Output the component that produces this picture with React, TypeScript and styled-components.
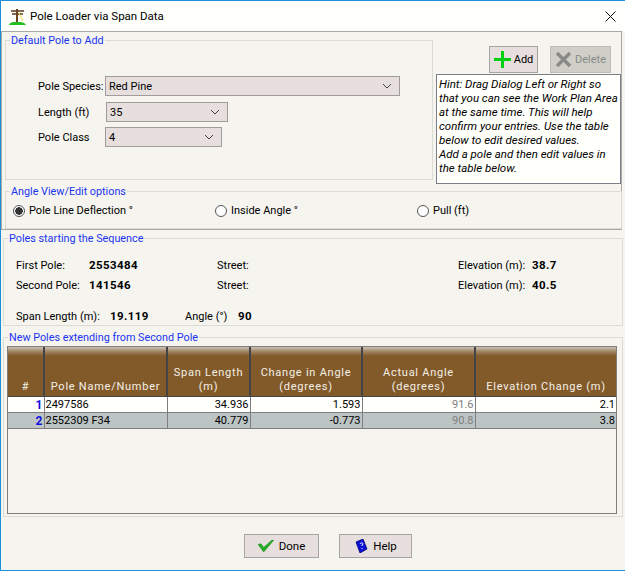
import React from 'react';
import styled, {createGlobalStyle} from 'styled-components';

const Global = createGlobalStyle`
  html, body { margin: 0; padding: 0; background: #f5f4ee; }
  body { font-family: Roboto, "Liberation Sans", sans-serif; font-size: 11px; color: #000; }
`

const Dialog = styled.div`
  width: 625px;
  height: 571px;
  box-sizing: border-box;
  border: 1px solid #1c8fdc;
  border-right: none;
  background: #f5f4ee;
  display: flex;
  flex-direction: column;
  overflow: hidden;
`

const TitleBar = styled.div`
  height: 30px;
  flex: none;
  background: #fffffb;
  display: flex;
  align-items: center;
  padding: 0 9px 0 8px;
  gap: 4px;
  font-size: 11.5px;
`

const TitleText = styled.span`
  flex: 1;
`

const UpperPanel = styled.div`
  width: 621px;
  height: 199px;
  box-sizing: border-box;
  flex: none;
  border: 1px solid #a8a8a8;
  padding-left: 3px;
  display: flex;
  flex-direction: column;
`

const TopRow = styled.div`
  display: flex;
  height: 151px;
  margin-top: 1px;
`

const Group = styled.fieldset<{ $w: number; $h: number; $ml?: number; $mt?: number }>`
  width: ${p => p.$w}px;
  height: ${p => p.$h}px;
  margin: ${p => p.$mt || 0}px 0 0 ${p => p.$ml || 0}px;
  box-sizing: border-box;
  flex: none;
  padding: 0;
  min-width: 0;
  border: 1px solid #dcdcd6;
`

const Legend = styled.legend`
  margin-left: 4px;
  padding: 1px 1px 0;
  color: #1a35f0;
  font-size: 10.8px;
  line-height: 13px;
`

const SpeciesForm = styled.div`
  display: flex;
  flex-direction: column;
  padding: 29px 0 0 32px;
`

const FormRow = styled.div<{ $gap: number }>`
  display: flex;
  align-items: center;
  height: 20px;
  margin-bottom: ${p => p.$gap}px;
`

const FormLabel = styled.span<{ $w: number }>`
  width: ${p => p.$w}px;
  flex: none;
  white-space: nowrap;
`

const Combo = styled.div<{ $w: number }>`
  width: ${p => p.$w}px;
  height: 20px;
  box-sizing: border-box;
  border: 1px solid #a09c9c;
  background: #e6dfdd;
  display: flex;
  align-items: center;
  justify-content: space-between;
  padding: 0 7px 0 3px;
`

const SideColumn = styled.div`
  margin-left: 3px;
  width: 186px;
  display: flex;
  flex-direction: column;
`

const ActionRow = styled.div`
  display: flex;
  height: 28px;
  margin-top: 13px;
  padding-left: 53px;
  gap: 12px;
`

const ActionButton = styled.div<{ $w: number; $off?: boolean }>`
  width: ${p => p.$w}px;
  height: 27px;
  box-sizing: border-box;
  border: 1px solid ${p => p.$off ? '#bdbdb6' : '#a8a4a4'};
  background: ${p => p.$off ? '#cfcfc8' : '#e6dfdd'};
  color: ${p => p.$off ? '#8a8a88' : '#000'};
  display: flex;
  align-items: center;
  justify-content: center;
  gap: 3px;
`

const HintBox = styled.div`
  height: 110px;
  box-sizing: border-box;
  border: 1px solid #807c88;
  background: #fffffb;
  padding: 2px 2px 0 2px;
  font-style: italic;
  font-size: 11.5px;
  line-height: 14px;
  white-space: nowrap;
`

const RadioRow = styled.div`
  display: grid;
  grid-template-columns: 202px 202px 1fr;
  padding: 2px 0 0 7px;
  height: 21px;
  align-items: center;
`

const RadioItem = styled.div`
  display: flex;
  align-items: center;
  gap: 4px;
`

const RadioDot = styled.span<{ $on?: boolean }>`
  width: 12px;
  height: 12px;
  box-sizing: border-box;
  border-radius: 50%;
  border: 1px solid #555;
  background: ${p => p.$on
    ? 'radial-gradient(circle, #333 0, #333 3.5px, #fff 4px)'
    : '#fff'};
`

const PoleRows = styled.div`
  padding: 10px 0 0 12px;
`

const PoleRow = styled.div`
  display: grid;
  grid-template-columns: 73px 128px 241px 74px 1fr;
  height: 20px;
  align-items: center;
`

const SpanRow = styled.div`
  display: flex;
  align-items: center;
  height: 20px;
  margin-top: 11px;
`

const SpanCell = styled.span<{ $w: number }>`
  width: ${p => p.$w}px;
  flex: none;
`

const Strong = styled.b`
  font-weight: 700;
  font-size: 11.5px;
  letter-spacing: 0.4px;
`

const GridFrame = styled.div`
  margin: 2px 0 0 3px;
  width: 610px;
  height: 168px;
  box-sizing: border-box;
  border: 1px solid #807c80;
`

const PoleTable = styled.table`
  width: 608px;
  border-collapse: collapse;
  table-layout: fixed;
`

const HeadCell = styled.th<{ $w: number }>`
  width: ${p => p.$w}px;
  height: 49px;
  box-sizing: border-box;
  padding: 0 2px 2px;
  font-weight: 400;
  vertical-align: bottom;
  text-align: center;
  color: #f4efe6;
  letter-spacing: 0.75px;
  line-height: 14px;
  border-right: 2px solid #444;
  border-bottom: 1px solid #444;
  background: linear-gradient(#c9c4b8 0, #9c805c 5px, #825a2a 9px, #825a2a 100%);
  &:last-child { border-right: none; }
`

const BodyRow = styled.tr<{ $alt?: boolean }>`
  background: ${p => p.$alt ? '#bcc4c4' : '#fffffb'};
  height: 16px;
`

const Cell = styled.td<{ $muted?: boolean; $left?: boolean }>`
  padding: 1px 1px 0;
  height: 16px;
  box-sizing: border-box;
  line-height: 14px;
  text-align: ${p => p.$left ? 'left' : 'right'};
  color: ${p => p.$muted ? '#808080' : '#000'};
  border-right: 1px solid #807c80;
  border-bottom: 1px solid #807c80;
  white-space: nowrap;
  &:last-child { border-right: none; }
`

const RowNum = styled(Cell)`
  color: #1010e0;
  font-weight: 700;
  font-size: 12px;
`

const Footer = styled.div`
  display: flex;
  gap: 20px;
  padding: 17px 0 0 243px;
`

const FootButton = styled.div<{ $w: number }>`
  width: ${p => p.$w}px;
  height: 24px;
  box-sizing: border-box;
  border: 1px solid #a8a4a4;
  background: #e6dfdd;
  display: flex;
  align-items: center;
  justify-content: center;
  gap: 5px;
  font-size: 11.5px;
`

const Chevron = () => (
  <svg width="10" height="6" viewBox="0 0 10 6"><path d="M1 1l4 4 4-4" fill="none" stroke="#444" strokeWidth="1" /></svg>
)

const PoleIcon = () => (
  <svg width="17" height="17" viewBox="0 0 17 17">
    <path d="M2 3h13M3 6h11" stroke="#5a3a1a" strokeWidth="1.5" />
    <path d="M7 1h2v13H7z" fill="#6b4520" />
    <path d="M10 5l4 8" stroke="#e8d840" strokeWidth="1" />
    <path d="M0 17c1-3 4-3 6-3h4c2 0 5 0 7 3z" fill="#20c020" />
  </svg>
)

const CloseIcon = () => (
  <svg width="11" height="11" viewBox="0 0 11 11"><path d="M.5.5l10 10M10.500.5l-10 10" stroke="#111" strokeWidth="1" fill="none" /></svg>
)

const PlusIcon = () => (
  <svg width="17" height="17" viewBox="0 0 17 17"><path d="M7 0h3v7h7v3h-7v7H7v-7H0V7h7z" fill="#00d010" /></svg>
)

const CrossIcon = () => (
  <svg width="17" height="17" viewBox="0 0 17 17"><path d="M2 2l13 13M15 2L2 15" stroke="#8a8a88" strokeWidth="3.500" fill="none" /></svg>
)

const CheckIcon = () => (
  <svg width="16" height="12" viewBox="0 0 17 13"><path d="M0 5l3-1 3 4 9-8 2 0L6 13z" fill="#20b020" stroke="#0c780c" strokeWidth=".5" /></svg>
)

const BookIcon = () => (
  <svg width="14" height="14" viewBox="0 0 14 14">
    <path d="M2 3l7-3 4 10-7 4z" fill="#0a10d8" stroke="#050570" strokeWidth=".8" />
    <path d="M6 5c1-2 3-1 3 0s-1 1-1.500 2M8 9v1" stroke="#fff" strokeWidth="1" fill="none" />
  </svg>
)

const rows = [
  {n: 1, name: '2497586', span: '34.936', change: '1.593', actual: '91.6', elev: '2.1'},
  {n: 2, name: '2552309 F34', span: '40.779', change: '-0.773', actual: '90.8', elev: '3.8'},
]

function App() {
  return (
    <Dialog>
      <Global />
      <TitleBar>
        <PoleIcon />
        <TitleText>Pole Loader via Span Data</TitleText>
        <CloseIcon />
      </TitleBar>
      <UpperPanel>
        <TopRow>
          <Group $w={428} $h={147}>
            <Legend>Default Pole to Add</Legend>
            <SpeciesForm>
              <FormRow $gap={6}>
                <FormLabel $w={67}>Pole Species:</FormLabel>
                <Combo $w={295}>Red Pine<Chevron /></Combo>
              </FormRow>
              <FormRow $gap={5}>
                <FormLabel $w={68}>Length (ft)</FormLabel>
                <Combo $w={122}>35<Chevron /></Combo>
              </FormRow>
              <FormRow $gap={0}>
                <FormLabel $w={67}>Pole Class</FormLabel>
                <Combo $w={117}>4<Chevron /></Combo>
              </FormRow>
            </SpeciesForm>
          </Group>
          <SideColumn>
            <ActionRow>
              <ActionButton $w={49}><PlusIcon />Add</ActionButton>
              <ActionButton $w={61} $off><CrossIcon />Delete</ActionButton>
            </ActionRow>
            <HintBox>
              Hint: Drag Dialog Left or Right so<br />
              that you can see the Work Plan Area<br />
              at the same time. This will help<br />
              confirm your entries. Use the table<br />
              below to edit desired values.<br />
              Add a pole and then edit values in<br />
              the table below.
            </HintBox>
          </SideColumn>
        </TopRow>
        <Group $w={617} $h={45}>
          <Legend>Angle View/Edit options</Legend>
          <RadioRow>
            <RadioItem><RadioDot $on />Pole Line Deflection °</RadioItem>
            <RadioItem><RadioDot />Inside Angle °</RadioItem>
            <RadioItem><RadioDot />Pull (ft)</RadioItem>
          </RadioRow>
        </Group>
      </UpperPanel>
      <Group $w={620} $h={95} $ml={2} $mt={1}>
        <Legend>Poles starting the Sequence</Legend>
        <PoleRows>
          <PoleRow><span>First Pole:</span><Strong>2553484</Strong><span>Street:</span><span>Elevation (m):</span><Strong>38.7</Strong></PoleRow>
          <PoleRow><span>Second Pole:</span><Strong>141546</Strong><span>Street:</span><span>Elevation (m):</span><Strong>40.5</Strong></PoleRow>
          <SpanRow>
            <SpanCell $w={94}>Span Length (m):</SpanCell>
            <SpanCell $w={75}><Strong>19.119</Strong></SpanCell>
            <SpanCell $w={53}>Angle (°)</SpanCell>
            <Strong>90</Strong>
          </SpanRow>
        </PoleRows>
      </Group>
      <Group $w={620} $h={187} $ml={2} $mt={4}>
        <Legend>New Poles extending from Second Pole</Legend>
        <GridFrame>
          <PoleTable>
            <thead>
              <tr>
                <HeadCell $w={36}>#</HeadCell>
                <HeadCell $w={123}>Pole Name/Number</HeadCell>
                <HeadCell $w={83}>Span Length<br />(m)</HeadCell>
                <HeadCell $w={112}>Change in Angle<br />(degrees)</HeadCell>
                <HeadCell $w={113}>Actual Angle<br />(degrees)</HeadCell>
                <HeadCell $w={141}>Elevation Change (m)</HeadCell>
              </tr>
            </thead>
            <tbody>
              {rows.map(r => (
                <BodyRow key={r.n} $alt={r.n % 2 === 0}>
                  <RowNum>{r.n}</RowNum>
                  <Cell $left>{r.name}</Cell>
                  <Cell>{r.span}</Cell>
                  <Cell>{r.change}</Cell>
                  <Cell $muted>{r.actual}</Cell>
                  <Cell>{r.elev}</Cell>
                </BodyRow>
              ))}
            </tbody>
          </PoleTable>
        </GridFrame>
      </Group>
      <Footer>
        <FootButton $w={75}><CheckIcon />Done</FootButton>
        <FootButton $w={73}><BookIcon />Help</FootButton>
      </Footer>
    </Dialog>
  )
}

export default App
